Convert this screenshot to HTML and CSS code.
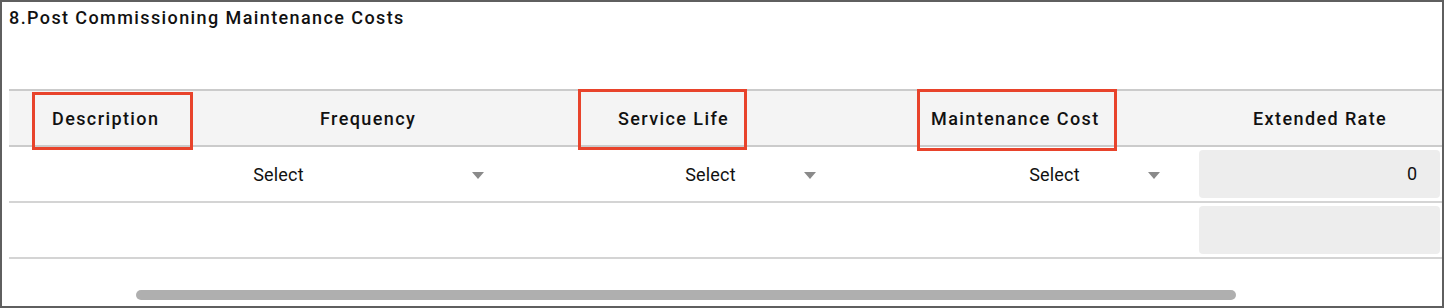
FILE: index.html
```html
<!DOCTYPE html>
<html lang="en">
<head>
  <meta charset="UTF-8" />
  <meta name="viewport" content="width=device-width, initial-scale=1.0"/>
  <title>Post Commissioning Maintenance Costs</title>
  <link rel="stylesheet" href="styles.css">
</head>
<body>

<div class="frame">
  <div class="section-title">8.Post Commissioning Maintenance Costs</div>

  <div class="cost-table">
    <div class="row head">
      <div class="cell c-desc">
        <span>Description</span>
        <div class="mark mark-desc"></div>
      </div>
      <div class="cell c-freq"><span>Frequency</span></div>
      <div class="cell c-life">
        <span>Service Life</span>
        <div class="mark mark-life"></div>
      </div>
      <div class="cell c-cost">
        <span>Maintenance Cost</span>
        <div class="mark mark-cost"></div>
      </div>
      <div class="cell c-rate"><span>Extended Rate</span></div>
    </div>

    <div class="row">
      <div class="cell c-desc"></div>
      <div class="cell c-freq">
        <div class="select wide"><span class="select-text">Select</span><span class="arrow"></span></div>
      </div>
      <div class="cell c-life">
        <div class="select"><span class="select-text">Select</span><span class="arrow"></span></div>
      </div>
      <div class="cell c-cost">
        <div class="select"><span class="select-text">Select</span><span class="arrow"></span></div>
      </div>
      <div class="cell c-rate">
        <div class="rate-input">0</div>
      </div>
    </div>

    <div class="row">
      <div class="cell c-desc"></div>
      <div class="cell c-freq"></div>
      <div class="cell c-life"></div>
      <div class="cell c-cost"></div>
      <div class="cell c-rate">
        <div class="rate-input"></div>
      </div>
    </div>
  </div>

  <div class="scroll-track">
    <div class="scroll-thumb"></div>
  </div>
</div>

</body>
</html>
```

FILE: styles.css
```css
/* base */
body {
  margin: 0;
  font-family: Roboto, 'Liberation Sans', sans-serif;
  color: #111;
  background: #fff;
}

.frame {
  height: 308px;
  box-sizing: border-box;
  border: 2px solid #5f5f5f;
  padding-left: 7px;
  overflow: hidden;
}

/* title */
.section-title {
  font-size: 18px;
  font-weight: 500;
  letter-spacing: 1.4px;
  line-height: 20px;
  padding-top: 6px;
  height: 81px;
  white-space: nowrap;
}

/* table */
.cost-table {
  width: 1435px;
}

.row {
  display: grid;
  grid-template-columns: 60px 471px 340px 315px 249px;
  height: 54px;
  border-bottom: 2px solid #d4d4d4;
}

.row.head {
  background: #f4f4f4;
  border-top: 2px solid #cbcbcb;
  border-bottom: 2px solid #cbcbcb;
}

.cell {
  display: flex;
  align-items: center;
  position: relative;
  white-space: nowrap;
}

.head .cell {
  font-size: 18px;
  font-weight: 500;
  letter-spacing: 1.4px;
}

.head .c-desc { padding-left: 43px; }
.head .c-freq { padding-left: 251px; }
.head .c-life { padding-left: 78px; }
.head .c-cost { padding-left: 51px; }
.head .c-rate { padding-left: 58px; }

/* red markers */
.mark {
  position: absolute;
  border: 3px solid #e8432b;
  box-sizing: border-box;
}

.mark-desc { left: 23px; top: 1px; width: 161px; height: 58px; }
.mark-life { left: 38px; top: -2px; width: 169px; height: 61px; }
.mark-cost { left: 37px; top: -2px; width: 200px; height: 62px; }

/* select */
.select {
  display: flex;
  align-items: center;
  width: 199px;
  font-size: 18px;
  letter-spacing: 0.2px;
}

.select.wide {
  width: 399px;
}

.select-text {
  flex: 1;
  text-align: center;
}

.arrow {
  width: 0;
  height: 0;
  border-left: 6.5px solid transparent;
  border-right: 6.5px solid transparent;
  border-top: 7px solid #8a8a8a;
  margin-top: 3px;
}

.row .c-freq .select { margin-left: 16px; }
.row .c-life .select { margin-left: 77px; }
.row .c-cost .select { margin-left: 81px; }

/* extended rate */
.rate-input {
  box-sizing: border-box;
  width: 241px;
  height: 48px;
  margin-left: 4px;
  background: #ededed;
  border-radius: 4px;
  font-size: 18px;
  line-height: 48px;
  text-align: right;
  padding-right: 23px;
}

/* scrollbar */
.scroll-track {
  padding-left: 127px;
  padding-top: 31px;
}

.scroll-thumb {
  width: 1100px;
  height: 10px;
  border-radius: 5px;
  background: #afafaf;
}
```
